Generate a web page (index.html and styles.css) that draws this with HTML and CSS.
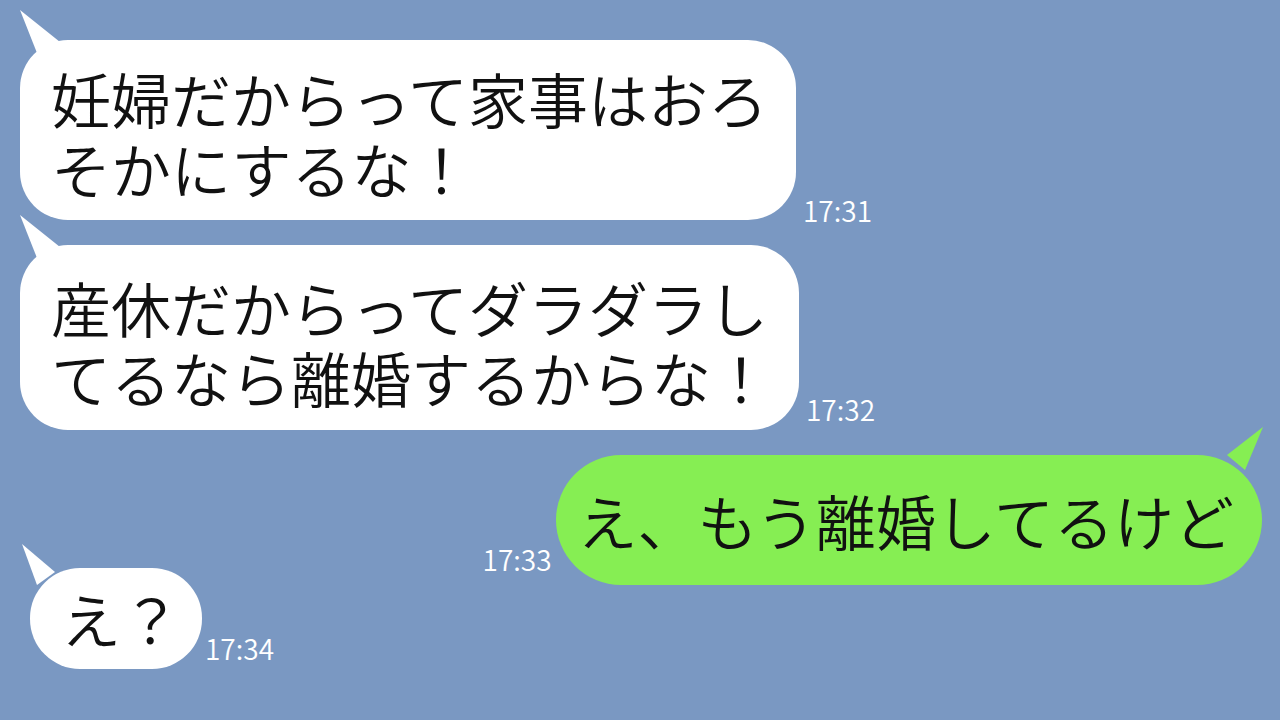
FILE: index.html
```html
<!DOCTYPE html>
<html lang="ja">
<head>
  <meta charset="UTF-8" />
  <meta name="viewport" content="width=device-width, initial-scale=1.0"/>
  <title>トーク</title>
  <link rel="stylesheet" href="styles.css">
</head>
<body>
  <div class="chat">
    <div class="row">
      <div class="bubble">妊婦だからって家事はおろ<br>そかにするな！</div>
      <span class="time time-low">17:31</span>
    </div>

    <div class="row">
      <div class="bubble bubble-tall">産休だからってダラダラし<br>てるなら離婚するからな！</div>
      <span class="time">17:32</span>
    </div>

    <div class="row mine">
      <span class="time time-high">17:33</span>
      <div class="bubble green">え、もう離婚してるけど</div>
    </div>

    <div class="row overlap">
      <div class="bubble short">え？</div>
      <span class="time">17:34</span>
    </div>
  </div>
</body>
</html>
```

FILE: styles.css
```css
* {
  box-sizing: border-box;
}
html, body {
  margin: 0;
  height: 100%;
}
body {
  background: #7a98c2;
  font-family: "Noto Sans CJK JP", "Noto Sans", sans-serif;
  color: #111;
  overflow: hidden;
}
.chat {
  padding: 40px 18px 0 20px;
  display: flex;
  flex-direction: column;
  gap: 25px;
}
.row {
  display: flex;
  align-items: flex-end;
  gap: 7px;
}
.row.mine {
  justify-content: flex-end;
  gap: 4px;
}
.row.overlap {
  margin-top: -42px;
  padding-left: 10px;
  gap: 3px;
}
.bubble {
  position: relative;
  background: #fff;
  font-size: 60px;
  font-weight: 350;
  line-height: 70px;
  white-space: nowrap;
  padding: 23px 28px 17px 31px;
  border-radius: 48px;
}
.bubble::before {
  content: "";
  position: absolute;
  left: 0;
  top: -30px;
  width: 45px;
  height: 50px;
  background: inherit;
  clip-path: polygon(0 0, 17px 43px, 40px 32px);
}
.bubble-tall {
  padding-top: 27px;
  padding-bottom: 18px;
}
.bubble.green {
  background: #86ee53;
  padding: 30px 28px 30px 22px;
  border-radius: 65px;
}
.bubble.green::before {
  left: auto;
  right: -1px;
  top: -28px;
  clip-path: polygon(45px 0, 9px 28px, 27px 43px);
}
.bubble.short {
  padding: 15px 21px 16px 31px;
  border-radius: 50px;
}
.bubble.short::before {
  left: -8px;
  top: -24px;
  width: 40px;
  height: 45px;
  clip-path: polygon(0 0, 15px 41px, 33px 28px);
}
.time {
  color: #fff;
  font-size: 28px;
  font-weight: 350;
  line-height: 1;
  margin-bottom: 7px;
}
.time-low {
  margin-bottom: -4px;
}
.time-high {
  margin-bottom: 12px;
}
```
